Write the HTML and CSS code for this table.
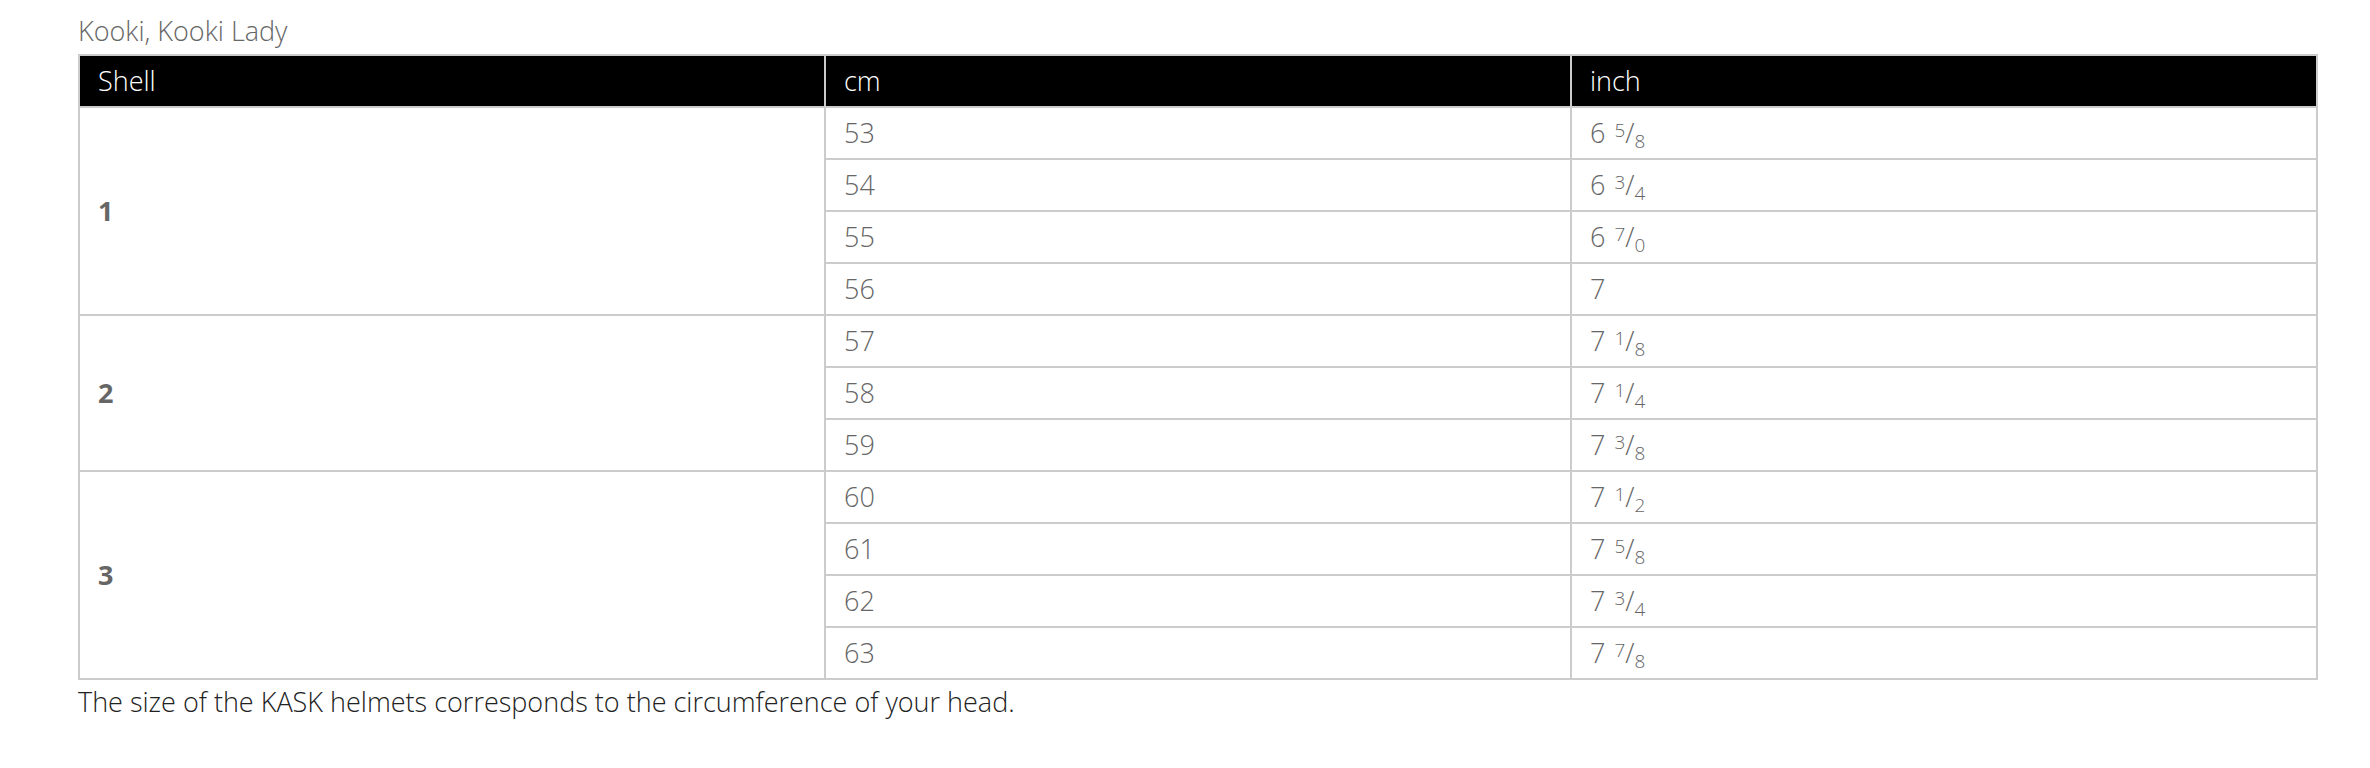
FILE: index.html
```html
<!DOCTYPE html>
<html lang="en">
<head>
<meta charset="utf-8">
<title>Kooki size chart</title>
<link rel="stylesheet" href="styles.css">
</head>
<body>
<div class="page">
  <h4 class="title">Kooki, Kooki Lady</h4>
  <table class="sizes">
    <thead>
      <tr><th>Shell</th><th>cm</th><th>inch</th></tr>
    </thead>
    <tbody>
      <tr><td class="shell" rowspan="4">1</td><td>53</td><td>6 <sup>5</sup>/<sub>8</sub></td></tr>
      <tr><td>54</td><td>6 <sup>3</sup>/<sub>4</sub></td></tr>
      <tr><td>55</td><td>6 <sup>7</sup>/<sub>0</sub></td></tr>
      <tr><td>56</td><td>7</td></tr>
      <tr><td class="shell" rowspan="3">2</td><td>57</td><td>7 <sup>1</sup>/<sub>8</sub></td></tr>
      <tr><td>58</td><td>7 <sup>1</sup>/<sub>4</sub></td></tr>
      <tr><td>59</td><td>7 <sup>3</sup>/<sub>8</sub></td></tr>
      <tr><td class="shell" rowspan="4">3</td><td>60</td><td>7 <sup>1</sup>/<sub>2</sub></td></tr>
      <tr><td>61</td><td>7 <sup>5</sup>/<sub>8</sub></td></tr>
      <tr><td>62</td><td>7 <sup>3</sup>/<sub>4</sub></td></tr>
      <tr><td>63</td><td>7 <sup>7</sup>/<sub>8</sub></td></tr>
    </tbody>
  </table>
  <p class="note">The size of the KASK helmets corresponds to the circumference of your head.</p>
</div>
</body>
</html>
```

FILE: styles.css
```css
html, body {
  margin: 0;
  padding: 0;
  background: #fff;
}

.page {
  padding: 11px 52px 0 78px;
  font-family: "Open Sans", "Liberation Sans", sans-serif;
}

.title {
  margin: 0 0 3px 0;
  font-size: 27px;
  line-height: 40px;
  font-weight: 300;
  color: #666;
}

.sizes {
  width: 100%;
  border-collapse: collapse;
  border: 2px solid #ccc;
  table-layout: fixed;
}

.sizes th,
.sizes td {
  border: 2px solid #ccc;
  padding: 0 18px;
  height: 50px;
  line-height: 50px;
  font-size: 27px;
  text-align: left;
  vertical-align: middle;
  white-space: nowrap;
}

.sizes th {
  background: #000;
  color: #fff;
  font-weight: 300;
}

.sizes td {
  color: #666;
  font-weight: 300;
}

.sizes td.shell {
  font-weight: 700;
}

.sizes sup,
.sizes sub {
  font-size: 70%;
  line-height: 0;
}

.sizes sup {
  vertical-align: 6px;
  margin-left: 2px;
}

.sizes sub {
  vertical-align: -5px;
}

.note {
  margin: 2px 0 0 0;
  font-size: 27px;
  line-height: 40px;
  font-weight: 300;
  color: #222;
}
```
